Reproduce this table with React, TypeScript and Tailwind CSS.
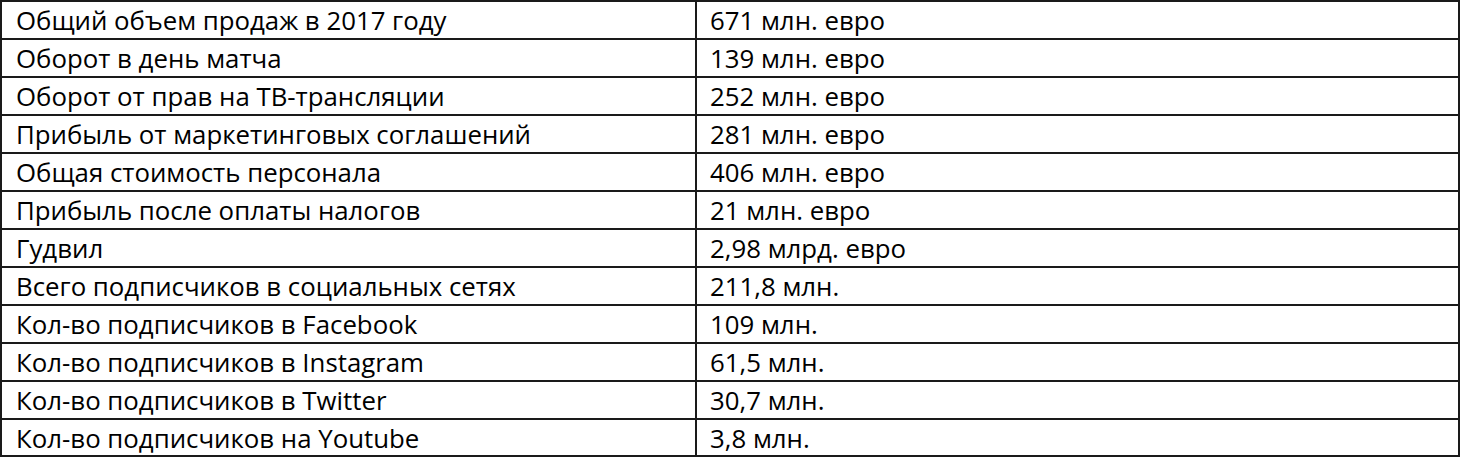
const rows: [string, string][] = [
  ['Общий объем продаж в 2017 году', '671 млн. евро'],
  ['Оборот в день матча', '139 млн. евро'],
  ['Оборот от прав на ТВ-трансляции', '252 млн. евро'],
  ['Прибыль от маркетинговых соглашений', '281 млн. евро'],
  ['Общая стоимость персонала', '406 млн. евро'],
  ['Прибыль после оплаты налогов', '21 млн. евро'],
  ['Гудвил', '2,98 млрд. евро'],
  ['Всего подписчиков в социальных сетях', '211,8 млн.'],
  ['Кол-во подписчиков в Facebook', '109 млн.'],
  ['Кол-во подписчиков в Instagram', '61,5 млн.'],
  ['Кол-во подписчиков в Twitter', '30,7 млн.'],
  ['Кол-во подписчиков на Youtube', '3,8 млн.'],
]

const App = () => {
  return (
    <div className="w-[1460px] h-[457px] bg-white overflow-hidden">
      <div
        className="w-[1460px] border-t-2 border-x-2 border-[#1a1a1a] text-[25.8px] leading-[30px] font-medium text-black"
        style={{ fontFamily: '"Open Sans", Lato, sans-serif' }}
      >
        {rows.map(([label, value], i) => (
          <div
            key={i}
            className={`grid grid-cols-[695px_1fr] border-b-2 border-[#1a1a1a] ${i === rows.length - 1 ? 'h-[37px]' : 'h-[38px]'}`}
          >
            <div className="flex items-center pl-[14px] border-r-2 border-[#1a1a1a]">{label}</div>
            <div className="flex items-center pl-[13px]">{value}</div>
          </div>
        ))}
      </div>
    </div>
  )
}

export default App
